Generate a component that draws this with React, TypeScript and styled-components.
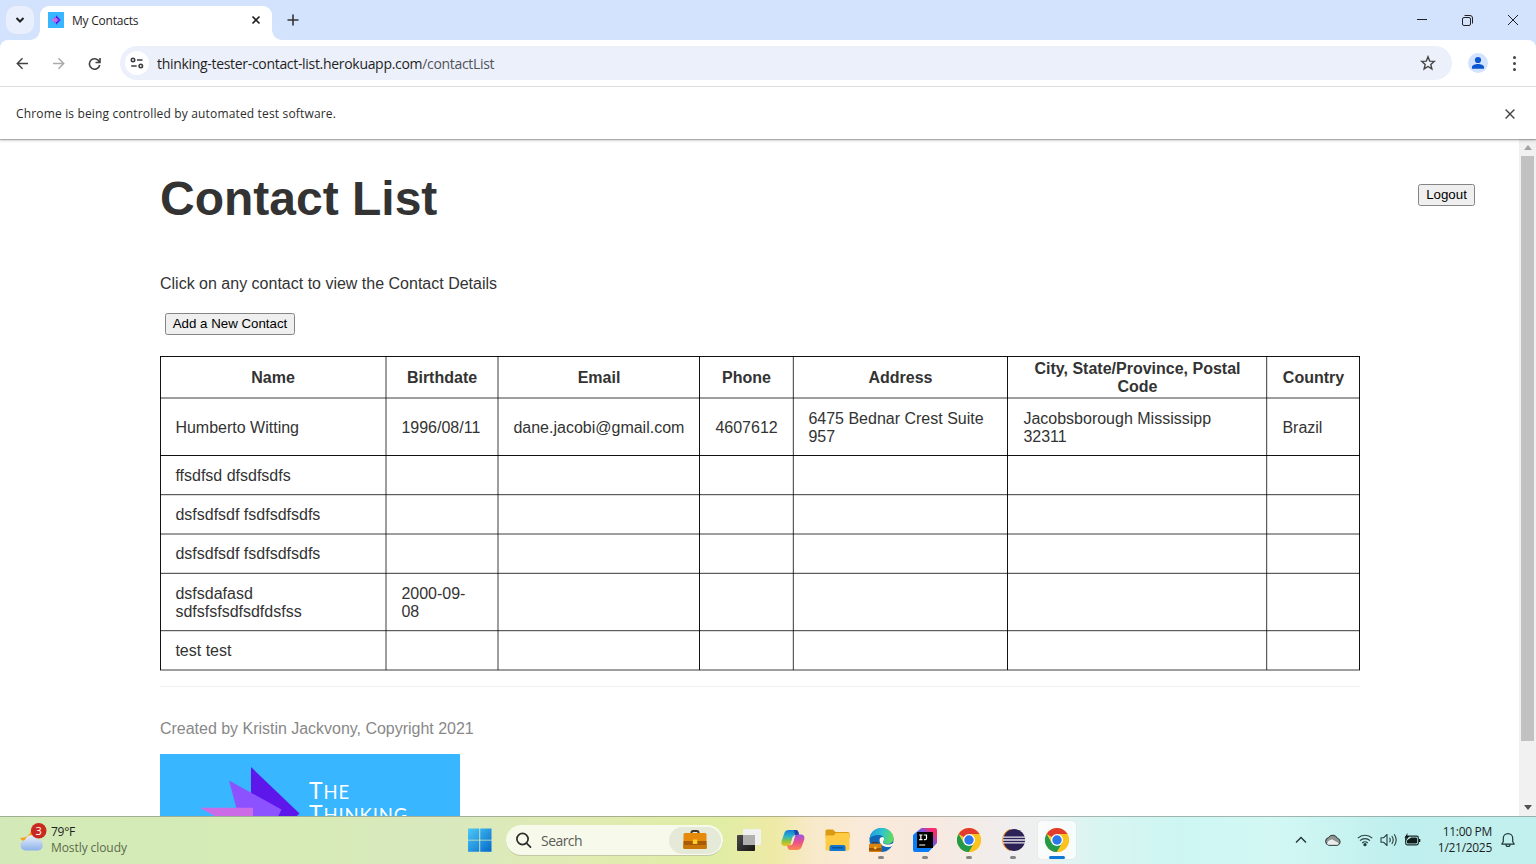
import React from 'react';
import styled, { createGlobalStyle } from 'styled-components';

const GlobalStyle = createGlobalStyle`
  *, *::before, *::after { box-sizing: border-box; }
  html, body { margin: 0; padding: 0; overflow: hidden; background: #fff; }
  svg { display: block; flex: none; }
`;

const uiFont = `'Open Sans', 'Noto Sans', sans-serif`;
const pageFont = `'Liberation Sans', Arial, sans-serif`;

const Screen = styled.div`
  width: 1536px;
  height: 864px;
  display: flex;
  flex-direction: column;
  overflow: hidden;
  font-family: ${uiFont};
  color: #1f1f1f;
`;

/* ---------- browser frame ---------- */

const BrowserTop = styled.div`
  flex: none;
  background: #d3e2fd;
`;

const TabStrip = styled.header`
  height: 40px;
  display: flex;
  padding: 6px 0 0 6px;
`;

const TabSearch = styled.button`
  width: 28px;
  height: 28px;
  border: 0;
  padding: 0;
  border-radius: 10px;
  background: #e9effd;
  display: flex;
  align-items: center;
  justify-content: center;
`;

const Tab = styled.div`
  position: relative;
  margin-left: 6px;
  width: 232px;
  height: 34px;
  padding: 0 11px 6px 8px;
  border-radius: 9px 9px 0 0;
  background: #fff;
  display: flex;
  align-items: center;

  &::before, &::after {
    content: '';
    position: absolute;
    bottom: 0;
    width: 10px;
    height: 10px;
  }
  &::before {
    left: -10px;
    background: radial-gradient(circle at 0 0, transparent 9.5px, #fff 10.2px);
  }
  &::after {
    right: -10px;
    background: radial-gradient(circle at 100% 0, transparent 9.5px, #fff 10.2px);
  }
`;

const TabTitle = styled.span`
  flex: 1;
  margin-left: 8px;
  padding-top: 2px;
  font-size: 12px;
  letter-spacing: -0.22px;
  line-height: 16px;
`;

const NewTab = styled.div`
  margin-left: 15px;
  height: 28px;
  display: flex;
  align-items: center;
`;

const WindowControls = styled.div`
  margin-left: auto;
  height: 28px;
  display: flex;
  align-items: center;
  padding-right: 17px;
  gap: 33px;
`;

const Toolbar = styled.div`
  height: 47px;
  display: flex;
  align-items: center;
  padding: 0 16px;
  background: #fff;
  border-bottom: 1px solid #dcdfde;
  border-radius: 8px 8px 0 0;
`;

const NavIcons = styled.div`
  display: flex;
  gap: 23px;
  width: 104px;
`;

const Omnibox = styled.div`
  width: 1332px;
  height: 34px;
  border-radius: 17px;
  background: #ecf0fa;
  display: flex;
  align-items: center;
  padding: 0 16px 0 5px;
`;

const SiteChip = styled.span`
  width: 24px;
  height: 24px;
  border-radius: 50%;
  background: #fff;
  display: flex;
  align-items: center;
  justify-content: center;
`;

const Url = styled.span`
  flex: 1;
  margin-left: 8px;
  padding-top: 1px;
  font-size: 14px;
  letter-spacing: -0.31px;
  line-height: 20px;
  span { color: #50535a; }
`;

const Avatar = styled.span`
  width: 20px;
  height: 20px;
  margin-left: 16px;
  border-radius: 50%;
  overflow: hidden;
  background: #d3e3fd;
`;

const MenuDots = styled.span`
  display: flex;
  flex-direction: column;
  gap: 3px;
  margin-left: 24.5px;
  i {
    width: 3px;
    height: 3px;
    border-radius: 50%;
    background: #444;
  }
`;

const InfoBar = styled.div`
  height: 52px;
  flex: none;
  display: flex;
  align-items: center;
  justify-content: space-between;
  padding: 1px 21px 0 16px;
  background: #fff;
  position: relative;
  z-index: 1;
  font-size: 12px;
  letter-spacing: 0.16px;
  color: #2c2c2c;
  box-shadow: 0 1px 1px rgba(0, 0, 0, 0.25), 0 2px 3px rgba(0, 0, 0, 0.13);
`;

/* ---------- contact list page ---------- */

const Viewport = styled.div`
  height: 677px;
  flex: none;
  display: flex;
  overflow: hidden;
  background: #fff;
  font-family: ${pageFont};
  font-size: 16px;
  line-height: 18px;
  color: #333;
`;

const Page = styled.main`
  width: 1519px;
  padding-left: 160px;
`;

const TitleRow = styled.div`
  display: flex;
  justify-content: space-between;
  align-items: flex-start;
  padding: 32px 44px 0 0;
  height: 136px;
`;

const Title = styled.h1`
  margin: 0;
  font-size: 48px;
  line-height: 55px;
  font-weight: 700;
`;

const PageButton = styled.button`
  height: 22px;
  padding: 0;
  border: 1px solid #858585;
  border-radius: 2.5px;
  background: #efefef;
  color: #000;
  font-family: ${pageFont};
  font-size: 13.3px;
  line-height: 18px;
`;

const LogoutButton = styled(PageButton)`
  width: 57px;
  margin-top: 13px;
`;

const AddButton = styled(PageButton)`
  display: block;
  width: 130px;
  margin: 20px 0 21px 5px;
`;

const Paragraph = styled.p`
  margin: 0;
`;

type Edges = { $l: string; $r: string; $t: string; $b: string };

const Table = styled.div`
  display: grid;
  grid-template-columns: 226px 112px 202px 93px 215px 259px 93px;
  grid-template-rows: 42px 58px 39px 39px 39px 58px 39px;
  width: 1200px;
  border-bottom: 1px solid #9e9e9e;
`;

const Cell = styled.div<Edges & { $head: boolean }>`
  display: flex;
  align-items: center;
  justify-content: ${(p) => (p.$head ? 'center' : 'flex-start')};
  text-align: ${(p) => (p.$head ? 'center' : 'left')};
  font-weight: ${(p) => (p.$head ? 700 : 400)};
  padding: 1px 15.4px 0;
  white-space: pre;
  box-shadow:
    inset 1px 0 ${(p) => p.$l},
    inset -1px 0 ${(p) => p.$r},
    inset 0 1px ${(p) => p.$t},
    inset 0 -1px ${(p) => p.$b};
`;

const Divider = styled.hr`
  width: 1200px;
  height: 1px;
  margin: 15px 0 33px;
  border: 0;
  background: #f0f0f0;
`;

const Credit = styled.p`
  margin: 0 0 16px;
  color: #888;
  letter-spacing: -0.02px;
`;

const Banner = styled.div`
  position: relative;
  width: 300px;
  height: 120px;
  background: #38b6ff;
`;

const BannerText = styled.div`
  position: absolute;
  left: 149px;
  top: 25px;
  font-family: Lato, sans-serif;
  font-size: 23px;
  line-height: 23px;
  letter-spacing: 0.9px;
  color: #fff;
  small { font-size: 18.5px; }
  div { height: 23px; white-space: nowrap; }
`;

const ScrollTrack = styled.div`
  width: 17px;
  background: #f1f1f1;
  display: flex;
  flex-direction: column;
  align-items: center;
`;

const ScrollArrow = styled.div<{ $down?: boolean }>`
  height: 17px;
  display: flex;
  align-items: center;
  margin-top: ${(p) => (p.$down ? 'auto' : 0)};
`;

const ScrollThumb = styled.div`
  width: 13px;
  height: 585px;
  background: #c1c1c1;
`;

/* ---------- taskbar ---------- */

const Taskbar = styled.footer`
  height: 48px;
  flex: none;
  display: flex;
  align-items: center;
  border-top: 1px solid rgba(120, 125, 120, 0.55);
  background: linear-gradient(90deg,
    #d3eab8 0, #d6ebb5 300px, #d9e9bf 440px, #dfebb4 560px, #e0eda4 720px,
    #eeeaa6 775px, #f7e9c8 810px, #faead9 860px, #f7e9df 930px, #f0eeee 1010px,
    #edf1f1 1045px, #d9f5f1 1095px, #cdf6f2 1180px, #d3f8f4 1270px, #bfefee 1400px, #c2f0ee 1536px);
`;

const Weather = styled.div`
  width: 458px;
  padding: 0 0 2px 18px;
  display: flex;
  align-items: center;
  gap: 3px;
  font-size: 12px;
  line-height: 16px;
  small { display: block; font-size: 12px; letter-spacing: -0.08px; color: #5b6b4c; }
  b { display: block; font-weight: 400; letter-spacing: -0.25px; }
`;

const Slot = styled.div<{ $active?: boolean; $running?: boolean }>`
  position: relative;
  width: 38px;
  height: 38px;
  margin: 0 3px 1px;
  border-radius: 4px;
  display: flex;
  align-items: center;
  justify-content: center;
  background: ${(p) => (p.$active ? 'rgba(255,255,255,0.7)' : 'transparent')};
  box-shadow: ${(p) => (p.$active ? '0 0 1px rgba(0,0,0,.2)' : 'none')};
  &::after {
    content: '';
    position: absolute;
    bottom: 0;
    left: 50%;
    transform: translateX(-50%);
    height: 3px;
    border-radius: 2px;
    width: ${(p) => (p.$active ? 16 : p.$running ? 6 : 0)}px;
    background: ${(p) => (p.$active ? '#0a78d4' : '#868583')};
  }
`;

const SearchBox = styled.div`
  width: 217px;
  height: 31px;
  margin: 0 4px;
  padding: 0 2px 0 9px;
  border-radius: 16px;
  border-bottom: 1px solid #c2c9a4;
  background: #f7f9ea;
  display: flex;
  align-items: center;
  font-size: 14px;
  color: #5c5c58;
  span { flex: 1; margin-left: 9px; letter-spacing: -0.55px; }
`;

const SearchHighlight = styled.div`
  width: 52px;
  height: 27px;
  border-radius: 14px;
  background: #e5e9d8;
  display: flex;
  align-items: center;
  justify-content: center;
`;

const Tray = styled.div`
  margin-left: auto;
  padding: 0 20px 1px 0;
  display: flex;
  align-items: center;
`;

const TrayIcon = styled.span<{ $gap: number }>`
  margin-right: ${(p) => p.$gap}px;
`;

const Clock = styled.div`
  width: 64px;
  margin-right: 8px;
  display: flex;
  flex-direction: column;
  align-items: flex-end;
  white-space: nowrap;
  text-align: right;
  font-size: 12px;
  line-height: 16px;
  letter-spacing: -0.3px;
`;

/* ---------- drawings ---------- */

const line = (d: string, size: number, width = 1.5, color = '#333', box = size) => (
  <svg width={size} height={size} viewBox={`0 0 ${box} ${box}`} fill="none" stroke={color} strokeWidth={width}>
    <path d={d} />
  </svg>
);

const Favicon = () => (
  <svg width="16" height="16" viewBox="0 0 16 16">
    <path d="M0 0h16v16H0z" fill="#38b6ff" />
    <path d="M8 3.200 12.700 8 8 12.800z" fill="#5e17eb" />
    <path d="m6.200 4.500 5 3.500-5 3.500z" fill="#8c52ff" />
    <path d="M3.300 8 6 6.200h3v3.600H6z" fill="#cb6ce6" />
  </svg>
);

const TuneIcon = () => (
  <svg width="14" height="14" viewBox="0 0 14 14" fill="none" stroke="#3c3d40" strokeWidth="1.6">
    <circle cx="3" cy="4" r="1.7" />
    <path d="M7 4h5.500M1.200 10h5.500" />
    <circle cx="10.800" cy="10" r="1.7" />
  </svg>
);

const ProfileIcon = () => (
  <svg width="20" height="20" viewBox="0 0 20 20" fill="#0b57d0">
    <circle cx="10" cy="7" r="3.1" />
    <path d="M4 15.800v-1.700c0-2 3.400-3 6-3s6 1 6 3v1.700z" />
  </svg>
);

const WeatherIcon = () => (
  <svg width="30" height="34" viewBox="0 0 30 34">
    <defs>
      <linearGradient id="cloud" x1="0" y1="0" x2="0" y2="1">
        <stop offset="0" stopColor="#e8f0fb" />
        <stop offset="1" stopColor="#8db2ea" />
      </linearGradient>
    </defs>
    <path d="M13 6c0 6-5 9-11 9 3 5 10 6 14 2z" fill="#f9a11b" />
    <path d="M7.500 27.500a5.300 5.300 0 0 1-.6-10.500 7 7 0 0 1 13-.5 5.600 5.600 0 0 1 .6 11z" fill="url(#cloud)" />
    <circle cx="20.700" cy="7.800" r="7.800" fill="#c92a20" />
    <text x="20.700" y="11.800" textAnchor="middle" fontSize="11" fill="#fff" fontFamily="Open Sans, sans-serif">3</text>
  </svg>
);

const WindowsIcon = () => (
  <svg width="24" height="24" viewBox="0 0 24 24">
    <defs>
      <linearGradient id="win" x1="0" y1="0" x2="1" y2="1">
        <stop offset="0" stopColor="#4cc9fa" />
        <stop offset="1" stopColor="#0369c9" />
      </linearGradient>
    </defs>
    <path d="M0 .5h11.300v11.200H0zM12.200.5h11.300v11.200H12.200zM0 12.500h11.300v11.200H0zM12.200 12.500h11.300v11.200H12.200z" fill="url(#win)" />
  </svg>
);

const Briefcase = ({ size = 24 }: { size?: number }) => (
  <svg width={size} height={size} viewBox="0 0 24 24">
    <path d="M8.500 6V4.500q0-1.500 1.500-1.500h4q1.500 0 1.500 1.500V6" fill="none" stroke="#40362c" strokeWidth="2" />
    <rect x=".5" y="5" width="23" height="16" rx="1.500" fill="#e68a0c" />
    <path d="M.5 13h23v6.500q0 1.500-1.500 1.500H2q-1.500 0-1.500-1.500z" fill="#a85a06" />
    <path d="M.5 17h23v2.500q0 1.500-1.500 1.500H2q-1.500 0-1.500-1.500z" fill="#c97608" />
    <rect x="9.800" y="11.500" width="4.500" height="4.500" rx=".6" fill="#ffcf2e" />
  </svg>
);

const TaskViewIcon = () => (
  <svg width="24" height="24" viewBox="0 0 24 24">
    <defs>
      <linearGradient id="tv" x1="0" y1="0" x2="1" y2="1">
        <stop offset="0" stopColor="#4a4a4a" />
        <stop offset="1" stopColor="#171717" />
      </linearGradient>
    </defs>
    <rect x="0" y="7" width="18" height="16" rx="1" fill="url(#tv)" />
    <rect x="6" y="1" width="18" height="16" rx="1" fill="#f1f1f1" />
    <rect x="6" y="7" width="12" height="10" fill="#b0b0ae" />
  </svg>
);

const CopilotIcon = () => (
  <svg width="24" height="24" viewBox="0 0 24 24">
    <defs>
      <linearGradient id="cpA" x1="0" y1="0" x2="0" y2="1">
        <stop offset="0" stopColor="#1678d8" />
        <stop offset=".4" stopColor="#2bb4c9" />
        <stop offset=".7" stopColor="#8fc43e" />
        <stop offset="1" stopColor="#f5c31c" />
      </linearGradient>
      <linearGradient id="cpB" x1="0" y1="0" x2="0" y2="1">
        <stop offset="0" stopColor="#9b55ea" />
        <stop offset=".5" stopColor="#ec4f8b" />
        <stop offset="1" stopColor="#fb8b4b" />
      </linearGradient>
    </defs>
    <path d="M8 2h6.500c2 0 2.500 1 3 3l.6 2H15c-2 0-2.600 1-3.200 3l-1.500 5c-.6 2-1.500 3-3.300 3H4c-3 0-4.200-2-3.400-5L3.200 5.500C4 3 5.500 2 8 2z" fill="url(#cpA)" />
    <path d="M13 2h2c1.600 0 2.200 1 2.700 3l.6 2H14z" fill="#2042ae" />
    <path d="M16 22H9.500c-2 0-2.500-1-3-3L6 17.500h2.500c2 0 3-1 3.600-3L13.600 9c.6-2 1.500-2.600 3.200-2.600h3c3 0 4.200 2.200 3.400 5L20.800 18.500C20 21 18.500 22 16 22z" fill="url(#cpB)" />
    <path d="M11.800 8.500h2l-2.300 7.200H9.700z" fill="#f6e9cf" />
  </svg>
);

const FolderIcon = () => (
  <svg width="25" height="24" viewBox="0 0 25 24">
    <path d="M.5 3q0-1.500 1.500-1.500h6L10.500 4H23q1.500 0 1.500 1.500V10H.5z" fill="#dc9a12" />
    <path d="M.5 7.500h8L11 5h12q1.500 0 1.500 1.500V21q0 1.500-1.500 1.500H2Q.5 22.500.5 21z" fill="#ffcb45" />
    <path d="M4.500 23v-4q0-2 2-2h12q2 0 2 2v4z" fill="#1377cf" />
    <path d="M7 19.800h11" stroke="#0a4e94" strokeWidth="1.300" />
  </svg>
);

const EdgeIcon = () => (
  <svg width="25" height="24" viewBox="0 0 25 24">
    <defs>
      <linearGradient id="edA" x1="0" y1=".3" x2="1" y2=".5">
        <stop offset="0" stopColor="#1d9be0" />
        <stop offset=".5" stopColor="#2fc4cf" />
        <stop offset="1" stopColor="#63dc56" />
      </linearGradient>
    </defs>
    <circle cx="12.500" cy="12" r="12" fill="#1266b8" />
    <path d="M.5 11C1 4.500 6 0 12.500 0c7 0 12 5 12 10 0 4-3 6-6 6-3 0-4.500-1-4.500-2 0-.8 1-1 1-2.700C15 9 13 7 9.500 7 6 7 2 8 .5 11z" fill="url(#edA)" />
    <path d="M10.500 12c0 4.500 4 7 8.500 7 1.700 0 3-.4 4-1 .8-.8 1.300-1.500 1.500-3-1 .8-3.300 1.500-5.500 1.500-3.500 0-5.500-1.300-5-3 .8-.8 1-1.500 1-2.500 0-1-.5-1.700-1.500-2-1.700 0-3 1.200-3 3z" fill="#fdf8ec" />
    <path d="M4 16v-1.500h4V16" fill="none" stroke="#4a3520" strokeWidth="1.200" />
    <rect x="0" y="15.800" width="12.500" height="8.200" rx=".8" fill="#dc820e" />
    <path d="M0 20h12.500v2.800H0z" fill="#9b5207" />
    <rect x="5.200" y="18.700" width="2.200" height="2.500" fill="#ffd23a" />
  </svg>
);

const IdeaIcon = () => (
  <svg width="24" height="24" viewBox="0 0 24 24">
    <defs>
      <linearGradient id="ij" x1="0" y1="1" x2="1" y2="0">
        <stop offset=".45" stopColor="#0a7cf8" />
        <stop offset=".65" stopColor="#8a4fd0" />
        <stop offset=".85" stopColor="#fb2a6c" />
      </linearGradient>
    </defs>
    <path d="M9 0h13q2 0 2 2v13l-8.500 9H2q-2 0-2-2V8q0-1 1-2L7.500.7Q8 0 9 0z" fill="url(#ij)" />
    <rect x="4" y="4" width="16" height="16" fill="#000" />
    <path d="M6.200 7h3.300M7.850 7v4.700M6.200 11.700h3.300M10.800 7h2.700v3.500q0 1.200-1.300 1.200h-1.300M6.200 17h6" stroke="#fff" strokeWidth="1.200" fill="none" />
  </svg>
);

const ChromeIcon = () => (
  <svg width="24" height="24" viewBox="0 0 24 24">
    <circle cx="12" cy="12" r="12" fill="#fcc934" />
    <path d="M12 12 1.600 6A12 12 0 0 1 22.400 6H12z" fill="#e33b2e" />
    <path d="M1.600 6A12 12 0 0 0 12 24l5.200-9L12 12 6.800 15z" fill="#229a4a" />
    <path d="M22.400 6H12v6l5.200 3L12 24A12 12 0 0 0 22.400 6z" fill="#fcc31e" />
    <circle cx="12" cy="12" r="6" fill="#fff" />
    <circle cx="12" cy="12" r="4.700" fill="#2b78ea" />
  </svg>
);

const EclipseIcon = () => (
  <svg width="25" height="24" viewBox="0 0 25 24">
    <path d="M9 1.500A11.200 11.200 0 0 0 9 22.500 13 13 0 0 1 9 1.500z" fill="#f7941e" stroke="#f7941e" />
    <circle cx="13.200" cy="12" r="10.900" fill="#2c2255" />
    <path d="M2 9.200h22.500M2 12h22.500M2 14.800h22.500" stroke="#e8e6f0" strokeWidth="1.300" />
  </svg>
);

const CloudIcon = () => (
  <svg width="18" height="14" viewBox="0 0 18 14">
    <path d="M5 12.300a4 4 0 0 1-.5-7.800 5 5 0 0 1 8.800.7 3.700 3.700 0 0 1 .3 7.100z" fill="#8d9492" stroke="#2c3333" />
    <path d="M3 11q.2-2.500 2-3.500l3-1.200 6.800 4q-.4 1.500-1.800 1.500H5q-1.500 0-2-.8z" fill="#e9eded" />
  </svg>
);

const WifiIcon = () => (
  <svg width="16" height="14" viewBox="0 0 16 14" fill="none" stroke="#27403f" strokeWidth="1.100">
    <path d="M.8 5.200a10.300 10.300 0 0 1 14.400 0M3 7.700a7.100 7.100 0 0 1 10 0M5.200 10a4 4 0 0 1 5.600 0" />
    <circle cx="8" cy="11.700" r="1.100" fill="#182a2a" />
  </svg>
);

const SpeakerIcon = () => (
  <svg width="18" height="14" viewBox="0 0 18 14" fill="none" stroke="#27403f" strokeWidth="1.100">
    <path d="M1 4.800h2.500L7 1.500v11L3.500 9.200H1z" strokeLinejoin="round" />
    <path d="M9.500 4.700q1.500 2.300 0 4.600M11.800 3q2.800 4 0 8M14.200 1.300q4 5.700 0 11.400" />
  </svg>
);

const BatteryIcon = () => (
  <svg width="17" height="14" viewBox="0 0 17 14">
    <rect x="1.700" y="3.200" width="12.600" height="8.600" rx="1.500" fill="none" stroke="#1c2b2b" strokeWidth="1.200" />
    <path d="M3.500 10V7.500L7 5h5.500v5z" fill="#111c1c" stroke="#111c1c" />
    <path d="M15 6h1.300v3H15z" fill="#111c1c" />
    <path d="M3.500 0 .5 4.800h2L1.800 8 5.500 3h-2.200z" fill="#111c1c" />
  </svg>
);

const BellIcon = () => (
  <svg width="16" height="16" viewBox="0 0 16 16" fill="none" stroke="#1f3636" strokeWidth="1.200">
    <path d="M1.800 12.200h12.400L12.700 9.500V6.300a4.700 4.700 0 0 0-9.400 0v3.200zM6 12.500a2 2 0 0 0 4 0" strokeLinejoin="round" />
  </svg>
);

const BannerArt = () => (
  <svg width="300" height="120" viewBox="0 0 300 120">
    <path d="M91 13v93l48.500-46.500z" fill="#5e17eb" />
    <path d="m69 26.500 52.500 29L100 100 78 60z" fill="#8c52ff" />
    <path d="M40 53.700h53V84z" fill="#cb6ce6" />
  </svg>
);

/* ---------- data ---------- */

const INK = 'rgba(0,0,0,.93)';
const MID = 'rgba(0,0,0,.38)';
const DARK = 'rgba(0,0,0,.64)';
const PALE = 'rgba(0,0,0,.14)';
const NONE = 'transparent';

/* [before, after] shade on either side of each grid boundary */
const columnLines = [[NONE, INK], [MID, MID], [MID, MID], [INK, NONE], [PALE, DARK], [INK, NONE], [DARK, PALE], [INK, NONE]];
const rowLines = [[NONE, INK], [MID, MID], [INK, NONE], [DARK, PALE], [MID, MID], [PALE, DARK], [DARK, PALE], [MID, NONE]];

const rows = [
  ['Name', 'Birthdate', 'Email', 'Phone', 'Address', 'City, State/Province, Postal\nCode', 'Country'],
  ['Humberto Witting', '1996/08/11', 'dane.jacobi@gmail.com', '4607612', '6475 Bednar Crest Suite\n957', 'Jacobsborough Mississipp\n32311', 'Brazil'],
  ['ffsdfsd dfsdfsdfs', '', '', '', '', '', ''],
  ['dsfsdfsdf fsdfsdfsdfs', '', '', '', '', '', ''],
  ['dsfsdfsdf fsdfsdfsdfs', '', '', '', '', '', ''],
  ['dsfsdafasd\nsdfsfsfsdfsdfdsfss', '2000-09-\n08', '', '', '', '', ''],
  ['test test', '', '', '', '', '', ''],
];

export default function App() {
  return (
    <Screen>
      <GlobalStyle />
      <BrowserTop>
        <TabStrip>
          <TabSearch>{line('M1.500 3l3.500 3.500L8.500 3', 10, 2, '#222')}</TabSearch>
          <Tab>
            <Favicon />
            <TabTitle>My Contacts</TabTitle>
            {line('M1.500 1.500l7 7M8.500 1.500l-7 7', 10, 1.6, '#222')}
          </Tab>
          <NewTab>{line('M6 .5v11M.5 6h11', 12, 1.6, '#333')}</NewTab>
          <WindowControls>
            {line('M1 5.500h10', 12, 1, '#222')}
            <svg width="13" height="13" viewBox="0 0 13 13" fill="none" stroke="#222">
              <rect x="1.500" y="3.500" width="8" height="8" rx="1.500" />
              <path d="M3.500 1.500H9q2.500 0 2.500 2.500v5.500" />
            </svg>
            {line('M1 1l10 10M11 1L1 11', 12, 1, '#222')}
          </WindowControls>
        </TabStrip>

        <Toolbar>
          <NavIcons>
            {line('M12 6.500H1.500M6.500 1.300L1.300 6.500l5.200 5.200', 13, 1.5, '#444')}
            {line('M1 6.500h10.500M6.500 1.300l5.200 5.200-5.200 5.200', 13, 1.5, '#aaa')}
            {line('M11.500 5.200A5.200 5.200 0 1 0 11.700 8M12 1v4.500H7.500', 13, 1.6, '#444')}
          </NavIcons>
          <Omnibox>
            <SiteChip><TuneIcon /></SiteChip>
            <Url>thinking-tester-contact-list.herokuapp.com<span>/contactList</span></Url>
            <svg width="16" height="16" viewBox="0 0 16 16" fill="none" stroke="#444" strokeWidth="1.400">
              <path d="M8 1.800l1.700 4.300 4.600.3-3.500 3 1.100 4.500L8 11.500l-3.900 2.400 1.100-4.500-3.500-3 4.600-.3z" />
            </svg>
          </Omnibox>
          <Avatar><ProfileIcon /></Avatar>
          <MenuDots><i /><i /><i /></MenuDots>
        </Toolbar>
      </BrowserTop>

      <InfoBar>
        Chrome is being controlled by automated test software.
        {line('M.6.6l8.800 8.800M9.400.6L.6 9.400', 10, 1.4, '#444')}
      </InfoBar>

      <Viewport>
        <Page>
          <TitleRow>
            <Title>Contact List</Title>
            <LogoutButton>Logout</LogoutButton>
          </TitleRow>
          <Paragraph>Click on any contact to view the Contact Details</Paragraph>
          <AddButton>Add a New Contact</AddButton>
          <Table>
            {rows.map((cells, r) =>
              cells.map((text, c) => (
                <Cell
                  key={`${r}-${c}`}
                  $head={r === 0}
                  $l={columnLines[c][1]}
                  $r={columnLines[c + 1][0]}
                  $t={rowLines[r][1]}
                  $b={rowLines[r + 1][0]}
                >
                  {text}
                </Cell>
              )),
            )}
          </Table>
          <Divider />
          <Credit>Created by Kristin Jackvony, Copyright 2021</Credit>
          <Banner>
            <BannerArt />
            <BannerText>
              <div>T<small>HE</small></div>
              <div>T<small>HINKING</small></div>
            </BannerText>
          </Banner>
        </Page>
        <ScrollTrack>
          <ScrollArrow><svg width="8" height="5"><path d="M0 5l4-5 4 5z" fill="#a3a3a3" /></svg></ScrollArrow>
          <ScrollThumb />
          <ScrollArrow $down><svg width="8" height="5"><path d="M0 0l4 5 4-5z" fill="#505050" /></svg></ScrollArrow>
        </ScrollTrack>
      </Viewport>

      <Taskbar>
        <Weather>
          <WeatherIcon />
          <div><b>79°F</b><small>Mostly cloudy</small></div>
        </Weather>
        <Slot><WindowsIcon /></Slot>
        <SearchBox>
          <svg width="17" height="17" viewBox="0 0 17 17" fill="none" stroke="#2b2d2b" strokeWidth="1.700">
            <circle cx="7.500" cy="7" r="5.600" />
            <path d="M11.500 11.200l4 4" strokeLinecap="round" />
          </svg>
          <span>Search</span>
          <SearchHighlight><Briefcase /></SearchHighlight>
        </SearchBox>
        <Slot><TaskViewIcon /></Slot>
        <Slot><CopilotIcon /></Slot>
        <Slot><FolderIcon /></Slot>
        <Slot $running><EdgeIcon /></Slot>
        <Slot $running><IdeaIcon /></Slot>
        <Slot $running><ChromeIcon /></Slot>
        <Slot $running><EclipseIcon /></Slot>
        <Slot $active><ChromeIcon /></Slot>
        <Tray>
          <TrayIcon $gap={17}>{line('M1 8.500l5-5 5 5', 12, 1.300, '#1f3030')}</TrayIcon>
          <TrayIcon $gap={15}><CloudIcon /></TrayIcon>
          <TrayIcon $gap={7}><WifiIcon /></TrayIcon>
          <TrayIcon $gap={6}><SpeakerIcon /></TrayIcon>
          <TrayIcon $gap={7}><BatteryIcon /></TrayIcon>
          <Clock><span>11:00 PM</span><span>1/21/2025</span></Clock>
          <BellIcon />
        </Tray>
      </Taskbar>
    </Screen>
  );
}
